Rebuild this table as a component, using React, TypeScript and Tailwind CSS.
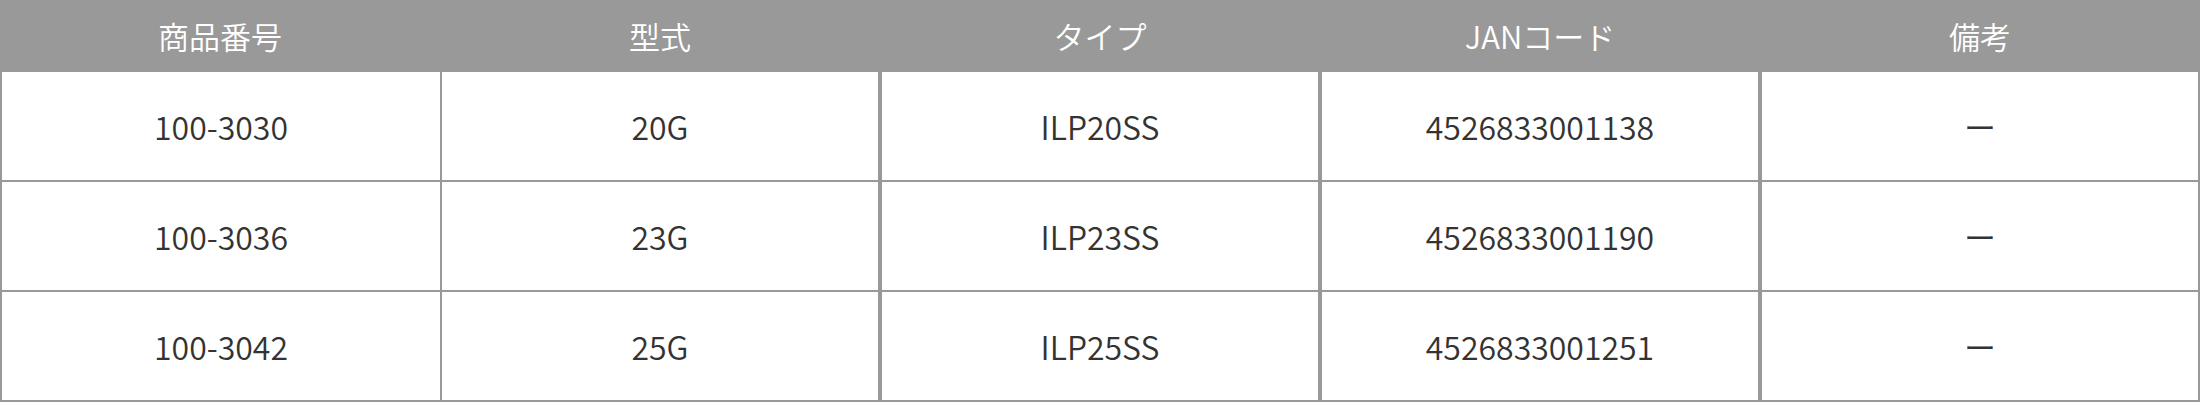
import React from "react";

const headers = ["商品番号", "型式", "タイプ", "JANコード", "備考"];
const rows = [
  ["100-3030", "20G", "ILP20SS", "4526833001138", "ー"],
  ["100-3036", "23G", "ILP23SS", "4526833001190", "ー"],
  ["100-3042", "25G", "ILP25SS", "4526833001251", "ー"],
];

const cellBorders = [
  "border-l-2",
  "border-l-2 border-r-2",
  "border-l-2 border-r-2",
  "border-l-2 border-r-2",
  "border-l-2 border-r-2",
];

export default function App() {
  return (
    <div
      className="w-[2200px] bg-white"
      style={{ fontFamily: '"Noto Sans CJK JP", "Noto Sans", sans-serif' }}
    >
      <div className="grid grid-cols-[440px_440px_440px_440px_440px] h-[72px] bg-[#999999] text-white text-[31px] font-[350]">
        {headers.map((h) => (
          <div key={h} className="flex items-center justify-center">
            {h}
          </div>
        ))}
      </div>
      {rows.map((r, i) => (
        <div
          key={i}
          className="grid grid-cols-[440px_440px_440px_440px_440px] h-[110px] border-b-2 border-[#999999]"
        >
          {r.map((c, j) => (
            <div
              key={j}
              className={`flex items-center justify-center border-[#999999] text-[#333333] text-[32px] font-[350] ${cellBorders[j]}`}
            >
              {c}
            </div>
          ))}
        </div>
      ))}
    </div>
  );
}
